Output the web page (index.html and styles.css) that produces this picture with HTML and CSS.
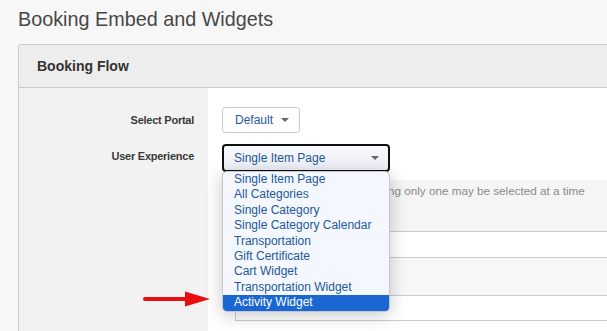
FILE: index.html
```html
<!DOCTYPE html>
<html>
<head>
<meta charset="utf-8">
<link rel="stylesheet" href="styles.css">
</head>
<body>
<div class="page">
  <h1 class="title">Booking Embed and Widgets</h1>
  <div class="panel">
    <div class="panel-head">Booking Flow</div>
    <div class="panel-body">
      <div class="labels">
        <div class="label l1">Select Portal</div>
        <div class="label l2">User Experience</div>
      </div>
      <div class="fields">
        <div class="sel sel-portal"><span>Default</span><i class="caret"></i></div>
        <div class="ux-wrap">
          <div class="sel sel-ux"><span>Single Item Page</span><i class="caret"></i></div>
          <ul class="dropdown">
            <li>Single Item Page</li>
            <li>All Categories</li>
            <li>Single Category</li>
            <li>Single Category Calendar</li>
            <li>Transportation</li>
            <li>Gift Certificate</li>
            <li>Cart Widget</li>
            <li>Transportation Widget</li>
            <li class="active">Activity Widget</li>
          </ul>
        </div>
        <div class="help"><span class="help-text">ng only one may be selected at a time</span></div>
        <div class="row-white"></div>
        <div class="row-gray"></div>
        <div class="input-box"></div>
      </div>
    </div>
  </div>
</div>
<svg class="arrow" width="70" height="20" viewBox="0 0 70 20">
  <line x1="2" y1="9" x2="46" y2="9" stroke="#e8100e" stroke-width="4" stroke-linecap="round"/>
  <polygon points="42,1.5 67,9 42,16.5" fill="#e8100e"/>
</svg>
</body>
</html>
```
FILE: styles.css
```css
* { box-sizing: border-box; }
body {
  margin: 0;
  background: #f7f7f7;
  font-family: "Liberation Sans", Arial, sans-serif;
  overflow: hidden;
}
.page { padding-left: 18px; }
.title {
  margin: 0;
  height: 44px;
  padding-top: 6px;
  font-size: 19.8px;
  line-height: 26px;
  font-weight: normal;
  color: #474747;
}
.panel {
  border: 1px solid #cccccc;
  border-right: none;
  border-radius: 3px 0 0 0;
  background: #fff;
}
.panel-head {
  height: 43px;
  background: #ededed;
  border-bottom: 1px solid #cccccc;
  border-radius: 3px 0 0 0;
  padding-left: 18px;
  display: flex;
  align-items: center;
  font-size: 14px;
  font-weight: bold;
  color: #333;
}
.panel-body {
  display: grid;
  grid-template-columns: 189px 1fr;
  height: 260px;
}
.labels {
  background: #f2f2f2;
  padding-top: 26px;
  padding-right: 14px;
  text-align: right;
}
.label {
  font-size: 11px;
  font-weight: bold;
  letter-spacing: -0.25px;
  color: #3a3a3a;
  line-height: 13px;
}
.l2 { margin-top: 23px; }
.fields {
  background: #fff;
  padding-top: 19px;
  padding-left: 14px;
}
.sel {
  display: flex;
  align-items: center;
  justify-content: space-between;
  font-size: 12px;
  color: #23599a;
  border-radius: 3px;
  padding: 0 10px 0 12px;
}
.sel-portal {
  width: 78px;
  height: 26px;
  border: 1px solid #cccccc;
  background: #fff;
}
.caret {
  width: 0;
  height: 0;
  border-left: 4px solid transparent;
  border-right: 4px solid transparent;
  border-top: 4px solid #666;
}
.ux-wrap {
  position: relative;
  margin-top: 11px;
  width: 168px;
}
.sel-ux {
  height: 28px;
  border: 2px solid #111;
  border-radius: 4px;
  background: linear-gradient(#f8f9fc, #edf0f7);
  padding: 0 9px 0 10px;
}
.dropdown {
  position: absolute;
  z-index: 2;
  left: 0;
  top: 27px;
  width: 168px;
  margin: 0;
  padding: 0;
  list-style: none;
  background: #f4f7fe;
  border: 1px solid #c4c7cc;
  border-radius: 5px;
  overflow: hidden;
  box-shadow: 0 3px 18px rgba(0, 0, 0, 0.22);
}
.dropdown li {
  height: 15.4px;
  line-height: 15.4px;
  font-size: 12px;
  color: #23599a;
  padding-left: 11px;
  white-space: nowrap;
}
.dropdown li.active {
  background: #1a66d2;
  color: #fff;
}
.help {
  margin-top: 8px;
  height: 52px;
  background: #f5f5f5;
  border-bottom: 1px solid #cccccc;
  padding-top: 3px;
  padding-left: 166px;
  font-size: 11.7px;
  line-height: 15px;
  color: #8a8a8a;
  white-space: nowrap;
}
.row-white {
  height: 26px;
  border-bottom: 1px solid #cccccc;
  background: #fff;
}
.row-gray {
  height: 38px;
  border-bottom: 1px solid #cccccc;
  background: #f7f7f7;
}
.input-box {
  margin-left: 13px;
  height: 25px;
  border-left: 1px solid #cccccc;
  border-bottom: 1px solid #cccccc;
  background: #fff;
}
.arrow {
  position: absolute;
  left: 143px;
  top: 290px;
}
```
